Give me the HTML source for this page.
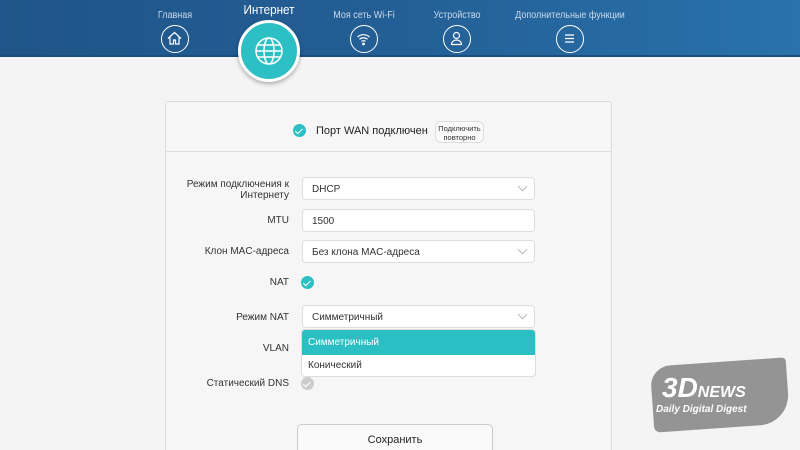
<!DOCTYPE html><html><head><meta charset="utf-8"><style>
*{margin:0;padding:0;box-sizing:border-box}
html,body{width:800px;height:450px;overflow:hidden}
body{background:#f4f4f4;font-family:"Liberation Sans","DejaVu Sans",sans-serif;position:relative}
.hdr{position:absolute;left:0;top:0;width:800px;height:57px;background:linear-gradient(90deg,#1f5588,#235f96 50%,#2a72ab);border-bottom:2px solid #1a4f80}
.nav{position:absolute;color:#c9d9ea;font-size:10px;text-align:center;transform:translateX(-50%) scaleX(.9);white-space:nowrap}
.ic{position:absolute;width:28px;height:28px;border:1.5px solid #fff;border-radius:50%;transform:translate(-50%,0)}
.ic svg{position:absolute;left:0;top:0}
.big{position:absolute;left:238px;top:20px;width:62px;height:62px;border-radius:50%;background:#2cc0c5;border:3px solid #fff;box-shadow:0 2px 4px rgba(0,0,0,.3)}
.panel{position:absolute;left:165px;top:101px;width:447px;height:360px;background:#f6f6f6;border:1px solid #dcdcdc;border-radius:3px}
.lbl{position:absolute;right:511px;font-size:10px;color:#333;text-align:right;line-height:11px}
.inp{position:absolute;left:302px;width:233px;height:23px;background:#fff;border:1px solid #ddd;border-radius:4px;font-size:10px;color:#333;padding:6px 9px}
.chev{position:absolute;right:8px;top:5px;width:7px;height:7px;border-right:1px solid #bbb;border-bottom:1px solid #bbb;transform:rotate(45deg)}
.chk{position:absolute;width:13px;height:13px;border-radius:50%;background:#2cc0c5}
.chk:after{content:"";position:absolute;left:4px;top:2.5px;width:3px;height:5.5px;border-right:1.5px solid #fff;border-bottom:1.5px solid #fff;transform:rotate(45deg)}
</style></head><body>
<div class="hdr"></div>
<div class="nav" style="left:175px;top:10px">Главная</div>
<div class="nav" style="left:269px;top:2px;font-size:13px;color:#fff">Интернет</div>
<div class="nav" style="left:364px;top:10px">Моя сеть Wi-Fi</div>
<div class="nav" style="left:457px;top:10px">Устройство</div>
<div class="nav" style="left:570px;top:10px">Дополнительные функции</div>
<div class="ic" style="left:175px;top:25px"><svg width="25" height="25" viewBox="0 0 25 25" fill="none" stroke="#fff" stroke-width="1.2"><path d="M6 12.5L12.5 6.5L19 12.5M8 11v7h3.5v-4h2v4H17v-7"/></svg></div>
<div class="ic" style="left:364px;top:25px"><svg width="25" height="25" viewBox="0 0 25 25" fill="none" stroke="#fff" stroke-width="1.2"><path d="M6.5 11a9 9 0 0 1 12 0M8.5 13.3a6 6 0 0 1 8 0M10.5 15.5a3 3 0 0 1 4 0"/><circle cx="12.5" cy="18" r=".8" fill="#fff"/></svg></div>
<div class="ic" style="left:457px;top:25px"><svg width="25" height="25" viewBox="0 0 25 25" fill="none" stroke="#fff" stroke-width="1.2"><circle cx="12.5" cy="9.5" r="3"/><path d="M7.5 18.5a5 4.5 0 0 1 10 0z"/></svg></div>
<div class="ic" style="left:570px;top:25px"><svg width="25" height="25" viewBox="0 0 25 25" fill="none" stroke="#fff" stroke-width="1.2"><path d="M8 9h9M8 12.5h9M8 16h9"/></svg></div>
<div class="big"><svg width="56" height="56" viewBox="0 0 56 56" fill="none" stroke="#fff" stroke-width="1.5"><circle cx="28" cy="28" r="13"/><ellipse cx="28" cy="28" rx="5" ry="13"/><path d="M15 28h26M17 22h22M17 34h22"/></svg></div>
<div class="panel"></div>
<div style="position:absolute;left:166px;top:151px;width:445px;border-top:1px solid #ddd"></div>
<div class="chk" style="left:293px;top:124px"></div>
<div style="position:absolute;left:316px;top:125px;font-size:11px;color:#222">Порт WAN подключен</div>
<div style="position:absolute;left:435px;top:121px;width:49px;height:22px;border:1px solid #ddd;border-radius:6px;background:#fafafa;font-size:7.5px;text-align:center;line-height:9px;padding-top:2px;color:#333">Подключить повторно</div>
<div class="lbl" style="top:179px">Режим подключения к<br>Интернету</div>
<div class="inp" style="top:177px">DHCP<div class="chev"></div></div>
<div class="lbl" style="top:215px">MTU</div>
<div class="inp" style="top:209px">1500</div>
<div class="lbl" style="top:246px">Клон MAC-адреса</div>
<div class="inp" style="top:240px">Без клона MAC-адреса<div class="chev"></div></div>
<div class="lbl" style="top:277px">NAT</div>
<div class="chk" style="left:301px;top:276px"></div>
<div class="lbl" style="top:312px">Режим NAT</div>
<div class="inp" style="top:305px">Симметричный<div class="chev"></div></div>
<div class="lbl" style="top:343px">VLAN</div>
<div style="position:absolute;left:301px;top:329px;width:235px;height:48px;background:#fff;border:1px solid #ddd;border-radius:4px;overflow:hidden;font-size:10px">
<div style="height:25px;background:#2bbfc4;color:#fff;padding:7px 6px">Симметричный</div>
<div style="padding:5px 6px;color:#333">Конический</div></div>
<div class="lbl" style="top:378px">Статический DNS</div>
<div class="chk" style="left:301px;top:377px;background:#ccc"></div>
<div style="position:absolute;left:297px;top:424px;width:196px;height:40px;border:1px solid #ccc;border-radius:5px;background:#fafafa;font-size:11px;text-align:center;padding-top:9px;color:#222">Сохранить</div>
<div style="position:absolute;left:652px;top:362px;width:136px;height:66px;background:#8a8a8a;border-radius:20px 4px 30px 6px;transform:rotate(-4deg);opacity:.9"></div>
<div style="position:absolute;left:662px;top:372px;font:bold italic 28px 'Liberation Sans',sans-serif;color:#fff">3D<span style="font-size:16px">NEWS</span></div>
<div style="position:absolute;left:656px;top:404px;font:bold italic 10px 'Liberation Sans',sans-serif;color:#fff">Daily Digital Digest</div>
</body></html>
